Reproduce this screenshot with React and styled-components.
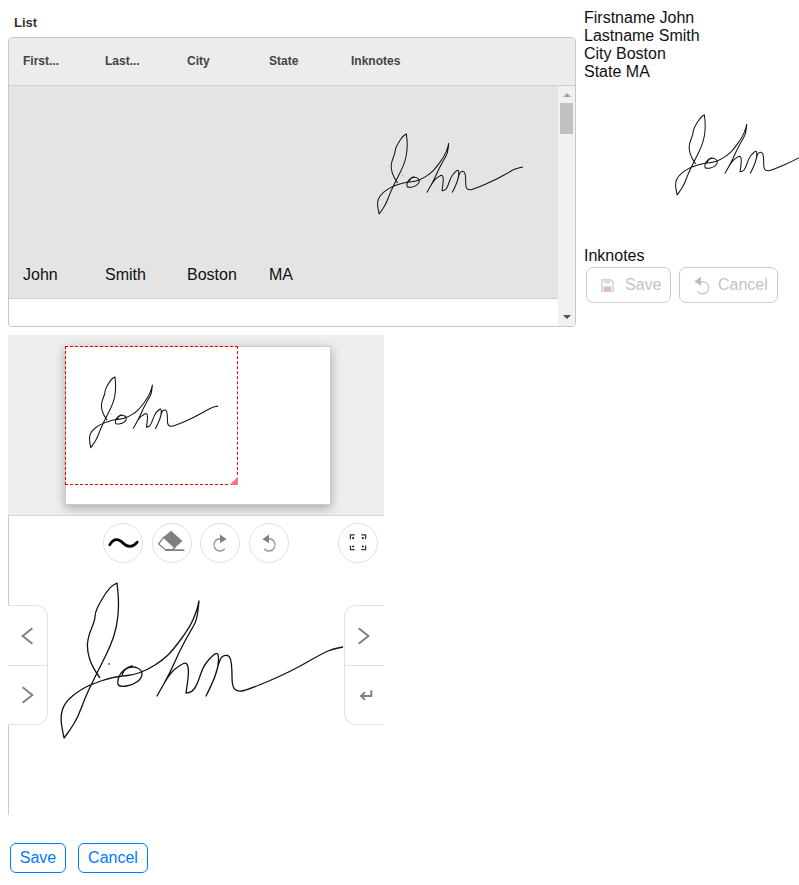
import styled, { createGlobalStyle } from "styled-components";

const GlobalStyle = createGlobalStyle`
  body {
    margin: 8px 0 8px 8px;
    font-family: "Liberation Sans", Arial, sans-serif;
    font-size: 16px;
    color: #111;
  }
`;

// repeated points are the sharp turns of the pen
const strokes = [
  [
    [100, 678], [92, 667], [87, 650], [88, 637], [95, 620], [95, 613], [100, 602], [110, 587],
    [117, 583], [117, 583], [119, 603], [117, 627], [110, 647], [102, 663], [92, 683], [85, 698], [78, 717],
    [70, 730], [64, 738], [64, 738], [60, 717], [65, 702], [80, 690], [92, 684], [110, 678], [122, 676],
    [133, 675], [147, 670], [163, 660], [173, 650], [190, 627], [197, 610], [199, 601], [199, 601], [197, 620],
    [190, 632], [180, 650], [170, 673], [157, 696], [157, 696], [170, 673], [180, 665], [187, 662], [189, 672],
    [186, 693], [186, 693], [192, 692], [197, 685], [203, 667], [210, 658], [217, 652], [219, 657], [217, 673],
    [206, 696], [206, 696], [215, 678], [220, 658], [225, 655], [230, 656], [232, 667], [232, 687], [238, 692],
    [250, 689], [290, 672], [323, 653], [333, 649], [343, 647],
  ],
  [
    [122, 676], [123, 670], [133, 666], [142, 670], [142, 678], [133, 685], [120, 687], [117, 683],
    [120, 673], [128, 667], [133, 666],
  ],
];

const toPath = (pts) => {
  let d = `M${pts[0][0]} ${pts[0][1]}`;
  for (let i = 1; i < pts.length - 1; i++) {
    const mx = (pts[i][0] + pts[i + 1][0]) / 2;
    const my = (pts[i][1] + pts[i + 1][1]) / 2;
    d += ` Q${pts[i][0]} ${pts[i][1]} ${mx} ${my}`;
  }
  const last = pts[pts.length - 1];
  return `${d} L${last[0]} ${last[1]}`;
};

const Signature = ({ width, stroke }) => (
  <SignatureSvg width={width} height={(width * 159) / 287} viewBox="58 581 287 159">
    {strokes.map((pts, i) => (
      <path key={i} d={toPath(pts)} fill="none" stroke="#111" strokeWidth={stroke} strokeLinejoin="round" />
    ))}
    <circle cx="109" cy="664" r="0.9" fill="#555" />
  </SignatureSvg>
);

const Squiggle = () => (
  <svg width="40" height="40" viewBox="0 0 40 40">
    <path d="M6 22 C10 15 15 15 20 20 C25 25 30 25 35 19" fill="none" stroke="#000" strokeWidth="2.8" strokeLinecap="round" />
  </svg>
);

const Eraser = () => (
  <svg width="40" height="40" viewBox="0 0 40 40">
    <path d="M19 7 L31 18 L23 25 L11 14 Z" fill="#808080" />
    <path d="M11 14 L6 21 L13 27 H20 L23 25 Z" fill="#fff" stroke="#808080" strokeWidth="1.4" />
    <path d="M13 27.5 H33" stroke="#808080" strokeWidth="1.8" />
  </svg>
);

const Redo = () => (
  <svg width="40" height="40" viewBox="0 0 40 40">
    <path d="M25 26 A6.4 6.4 0 1 1 20 15.6" fill="none" stroke="#9a9a9a" strokeWidth="1.5" />
    <path d="M20 11 L27 16 L20 20 Z" fill="#808080" />
  </svg>
);

const Undo = () => (
  <svg width="40" height="40" viewBox="0 0 40 40">
    <path d="M15 26 A6.4 6.4 0 1 0 20 15.6" fill="none" stroke="#9a9a9a" strokeWidth="1.5" />
    <path d="M20 11 L13 16 L20 20 Z" fill="#808080" />
  </svg>
);

const Expand = () => (
  <svg width="40" height="40" viewBox="0 0 40 40">
    <path
      d="M12 16 V11.5 H16.5 M23.5 11.5 H28 V16 M12 22.5 V27 H16.5 M23.5 27 H28 V22.5"
      fill="none"
      stroke="#333"
      strokeWidth="1.3"
    />
    <path d="M14 14 h1.8 v1.8 h-1.8 Z M24.2 14 h1.8 v1.8 h-1.8 Z M14 22.8 h1.8 v1.8 h-1.8 Z M24.2 22.8 h1.8 v1.8 h-1.8 Z" fill="#000" />
  </svg>
);

const Chevron = ({ flip, dx = 0 }) => (
  <svg width="40" height="60" viewBox="0 0 40 60">
    <path
      d={flip ? "M25 22 L15 30 L25 38" : "M15 22 L25 30 L15 38"}
      fill="none"
      stroke="#808080"
      strokeWidth="2"
      transform={`translate(${dx} 0)`}
    />
  </svg>
);

const ReturnArrow = () => (
  <svg width="40" height="60" viewBox="0 0 40 60">
    <path d="M27 25 V31 H16.5 M20.5 27 L16.5 31 L20.5 35" fill="none" stroke="#808080" strokeWidth="2" />
  </svg>
);

const Floppy = () => (
  <svg width="13" height="13" viewBox="0 0 14 14">
    <path d="M1 1 H10.5 L13 3.5 V13 H1 Z" fill="none" stroke="#c9c9c9" strokeWidth="1.4" />
    <path d="M3.5 1.5 H9.5 V5 H3.5 Z" fill="#d8d8d8" />
    <path d="M3 8 H11 V13 H3 Z" fill="#e3b9c0" />
  </svg>
);

const FadedUndo = () => (
  <svg width="18" height="20" viewBox="0 0 18 20">
    <path d="M6 15.5 A6 6 0 1 0 9 6" fill="none" stroke="#c9c9c9" strokeWidth="1.5" transform="translate(0 1)" />
    <path d="M9 1.5 L2.5 6.5 L9 11 Z" fill="#bdbdbd" />
  </svg>
);

const App = () => {
  return (
    <>
      <GlobalStyle />
      <TopRow>
        <ListColumn>
          <ListTitle>List</ListTitle>
          <Table>
            <HeaderRow>
              <HeaderCell>First...</HeaderCell>
              <HeaderCell>Last...</HeaderCell>
              <HeaderCell>City</HeaderCell>
              <HeaderCell>State</HeaderCell>
              <HeaderCell>Inknotes</HeaderCell>
            </HeaderRow>
            <TableBody>
              <Rows>
                <DataRow>
                  <DataCell>John</DataCell>
                  <DataCell>Smith</DataCell>
                  <DataCell>Boston</DataCell>
                  <DataCell>MA</DataCell>
                  <InkCell>
                    <Signature width={148} stroke={2} />
                  </InkCell>
                </DataRow>
              </Rows>
              <Scrollbar>
                <ScrollArrow $dir="up" />
                <ScrollThumb />
                <ScrollArrow $dir="down" />
              </Scrollbar>
            </TableBody>
          </Table>
        </ListColumn>
        <DetailColumn>
          <DetailLine>Firstname John</DetailLine>
          <DetailLine>Lastname Smith</DetailLine>
          <DetailLine>City Boston</DetailLine>
          <DetailLine>State MA</DetailLine>
          <DetailInk>
            <Signature width={148} stroke={2} />
          </DetailInk>
          <DetailLine>Inknotes</DetailLine>
          <DetailActions>
            <GhostButton $width={85} $inset={14} $gap={11}>
              <Floppy />
              Save
            </GhostButton>
            <GhostButton $width={99} $inset={12} $gap={8}>
              <FadedUndo />
              Cancel
            </GhostButton>
          </DetailActions>
        </DetailColumn>
      </TopRow>

      <Editor>
        <PreviewArea>
          <Paper>
            <CropBox>
              <Signature width={131} stroke={2.3} />
              <CropHandle />
            </CropBox>
          </Paper>
        </PreviewArea>
        <InkArea>
          <Toolbar>
            <RoundButton><Squiggle /></RoundButton>
            <RoundButton><Eraser /></RoundButton>
            <RoundButton><Redo /></RoundButton>
            <RoundButton><Undo /></RoundButton>
            <RoundButton $push><Expand /></RoundButton>
          </Toolbar>
          <InkSignature>
            <Signature width={287} stroke={1.3} />
          </InkSignature>
          <SidePad $side="left">
            <PadButton><Chevron flip /></PadButton>
            <PadButton><Chevron /></PadButton>
          </SidePad>
          <SidePad $side="right">
            <PadButton><Chevron dx={-1} /></PadButton>
            <PadButton><ReturnArrow /></PadButton>
          </SidePad>
        </InkArea>
      </Editor>

      <FormActions>
        <OutlineButton $width={56}>Save</OutlineButton>
        <OutlineButton $width={70}>Cancel</OutlineButton>
      </FormActions>
    </>
  );
};

const SignatureSvg = styled.svg`
  display: block;
  flex-shrink: 0;
`;

const TopRow = styled.div`
  display: flex;
  gap: 8px;
`;

const ListColumn = styled.div`
  width: 568px;
  flex-shrink: 0;
`;

const ListTitle = styled.div`
  height: 29px;
  line-height: 30px;
  padding-left: 6px;
  font-size: 13px;
  font-weight: bold;
  color: #333;
`;

const Table = styled.div`
  height: 290px;
  box-sizing: border-box;
  border: 1px solid #c8c8c8;
  border-radius: 4px;
  overflow: hidden;
  display: flex;
  flex-direction: column;
`;

const HeaderRow = styled.div`
  height: 48px;
  flex-shrink: 0;
  box-sizing: border-box;
  display: grid;
  grid-template-columns: repeat(4, 82px) 1fr;
  align-items: center;
  padding: 0 0 1px 14px;
  background: #ececec;
  border-bottom: 1px solid #cfcfcf;
`;

const HeaderCell = styled.div`
  font-size: 12px;
  font-weight: bold;
  color: #444;
`;

const TableBody = styled.div`
  flex: 1;
  display: flex;
  min-height: 0;
`;

const Rows = styled.div`
  flex: 1;
`;

const DataRow = styled.div`
  height: 213px;
  box-sizing: border-box;
  display: grid;
  grid-template-columns: repeat(4, 82px) 1fr;
  padding-left: 14px;
  background: #e4e4e4;
  border-bottom: 1px solid #cfcfcf;
`;

const DataCell = styled.div`
  align-self: end;
  line-height: 18px;
  padding-bottom: 14px;
`;

const InkCell = styled.div`
  padding: 47px 0 0 25px;
`;

const Scrollbar = styled.div`
  width: 17px;
  flex-shrink: 0;
  display: flex;
  flex-direction: column;
  align-items: center;
  background: #f1f1f1;
`;

const ScrollArrow = styled.div`
  width: 0;
  height: 0;
  border-left: 4px solid transparent;
  border-right: 4px solid transparent;
  ${(p) =>
    p.$dir === "up"
      ? `border-bottom: 4px solid #a3a3a3; margin: 7px 0 6px;`
      : `border-top: 4px solid #505050; margin: auto 0 7px;`}
`;

const ScrollThumb = styled.div`
  width: 13px;
  height: 31px;
  background: #c1c1c1;
`;

const DetailColumn = styled.div`
  width: 215px;
  flex-shrink: 0;
  padding-top: 1px;
  overflow: hidden;
`;

const DetailLine = styled.div`
  line-height: 18px;
`;

const DetailInk = styled.div`
  height: 166px;
  box-sizing: border-box;
  padding: 33px 0 0 90px;
`;

const DetailActions = styled.div`
  display: flex;
  gap: 8px;
  margin: 2px 0 0 2px;
`;

const GhostButton = styled.div`
  width: ${(p) => p.$width}px;
  height: 36px;
  box-sizing: border-box;
  display: flex;
  align-items: center;
  gap: ${(p) => p.$gap}px;
  padding-left: ${(p) => p.$inset}px;
  border: 1px solid #cccccc;
  border-radius: 7px;
  color: #c4c4c4;
`;

const Editor = styled.div`
  width: 376px;
  margin-top: 8px;
`;

const PreviewArea = styled.div`
  height: 180px;
  box-sizing: border-box;
  padding: 11px 0 0 57px;
  background: #eeeeee;
`;

const Paper = styled.div`
  width: 266px;
  height: 159px;
  box-sizing: border-box;
  background: #fff;
  box-shadow: inset 0 0 0 1px #cccccc, 0 3px 10px rgba(0, 0, 0, 0.3);
`;

const CropBox = styled.div`
  position: relative;
  width: 173px;
  height: 139px;
  box-sizing: border-box;
  padding: 29px 0 0 22px;
  border: 1px dashed #ff0000;
`;

const CropHandle = styled.div`
  position: absolute;
  right: -1px;
  bottom: -1px;
  width: 9px;
  height: 9px;
  background: linear-gradient(135deg, transparent 50%, #ff7777 50%);
`;

const InkArea = styled.div`
  position: relative;
  height: 300px;
  box-sizing: border-box;
  border-top: 1px solid #d4d4d4;
  border-left: 1px solid #cccccc;
`;

const Toolbar = styled.div`
  display: flex;
  gap: 8.7px;
  padding: 7px 0 0 94px;
`;

const RoundButton = styled.div`
  width: 40px;
  height: 40px;
  box-sizing: border-box;
  border: 1px solid #e0e0e0;
  border-radius: 50%;
  display: flex;
  align-items: center;
  justify-content: center;
  margin-left: ${(p) => (p.$push ? "40px" : "0")};
`;

const InkSignature = styled.div`
  position: absolute;
  left: 49px;
  top: 65px;
`;

const SidePad = styled.div`
  position: absolute;
  top: 89px;
  ${(p) => (p.$side === "left" ? "left: -1px;" : "right: 0;")}
  width: 40px;
  height: 120px;
  box-sizing: border-box;
  background: #fff;
  border: 1px solid #e2e2e2;
  ${(p) =>
    p.$side === "left"
      ? "border-left: none; border-radius: 0 12px 12px 0;"
      : "border-right: none; border-radius: 12px 0 0 12px;"}
  display: flex;
  flex-direction: column;
`;

const PadButton = styled.div`
  flex: none;
  height: 59px;
  box-sizing: border-box;
  display: flex;
  align-items: center;
  justify-content: center;
  & + & {
    border-top: 1px solid #e2e2e2;
  }
`;

const FormActions = styled.div`
  display: flex;
  gap: 12px;
  margin-top: 28px;
  padding-left: 2px;
`;

const OutlineButton = styled.div`
  width: ${(p) => p.$width}px;
  height: 30px;
  box-sizing: border-box;
  display: flex;
  align-items: center;
  justify-content: center;
  border: 1px solid #007bff;
  border-radius: 6px;
  color: #007bff;
`;

export default App;
